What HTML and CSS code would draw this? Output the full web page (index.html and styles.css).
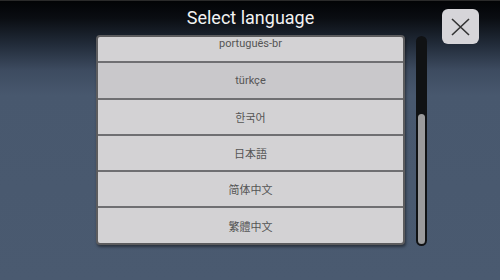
FILE: index.html
```html
<html>
    <head>
        <link rel="stylesheet" href="styles.css">
    </head>
    <body>
        <div class="screen">
            <div class="main">
                <h1 class="title">Select language</h1>
                <div class="panel">
                    <div class="list">
                        <div class="row">português-br</div>
                        <div class="row active">türkçe</div>
                        <div class="row" lang="ko">한국어</div>
                        <div class="row" lang="ja">日本語</div>
                        <div class="row" lang="zh-CN">简体中文</div>
                        <div class="row" lang="zh-TW">繁體中文</div>
                    </div>
                </div>
            </div>
            <div class="scrollbar">
                <div class="thumb"></div>
            </div>
            <button class="close">
                <svg width="19" height="18" viewBox="0 0 19 18">
                    <path d="M1 1 L18 17 M18 1 L1 17" stroke="#333" stroke-width="1.6" fill="none"/>
                </svg>
            </button>
        </div>
    </body>
</html>
```

FILE: styles.css
```css
body{
    margin: 0;
    width: 500px;
    height: 280px;
    overflow: hidden;
    font-family: Roboto, "Noto Sans", sans-serif;
    background: linear-gradient(to bottom, #020305 0px, #0a0d12 18px, #222c3a 45px, #3d4b60 70px, #48586e 95px, #4a5a70 100%);
}
.screen{
    display: flex;
    height: 280px;
    padding-left: 96px;
    box-sizing: border-box;
    border-top: 1px solid #2a2a2a;
}
.main{
    width: 309px;
    display: flex;
    flex-direction: column;
}
.title{
    margin: 0;
    height: 34px;
    line-height: 34px;
    text-align: center;
    color: #f2f2f2;
    font-size: 18px;
    font-weight: normal;
}
.panel{
    height: 210px;
    box-sizing: border-box;
    border: 2px solid #5c5c5e;
    border-radius: 4px;
    overflow: hidden;
    background-color: #d3d2d4;
    box-shadow: 1px 2px 3px rgba(0, 0, 0, 0.45);
}
.list{
    margin-top: -12px;
}
.row{
    height: 36.3px;
    box-sizing: border-box;
    border-top: 2px solid #6f6f72;
    display: flex;
    align-items: center;
    justify-content: center;
    color: #555;
    font-size: 11px;
    font-family: Roboto, "Noto Sans CJK KR", "Noto Sans CJK JP", sans-serif;
}
.row:first-child{
    border-top: none;
}
.row[lang=ko]{
    font-family: "Noto Sans CJK KR", sans-serif;
}
.row[lang=ja]{
    font-family: "Noto Sans CJK JP", sans-serif;
}
.row[lang=zh-CN]{
    font-family: "Noto Sans CJK SC", sans-serif;
}
.row[lang=zh-TW]{
    font-family: "Noto Sans CJK TC", sans-serif;
}
.active{
    background-color: #c9c8cb;
}
.scrollbar{
    width: 11px;
    height: 210px;
    margin-top: 35px;
    margin-left: 11px;
    box-sizing: border-box;
    padding: 78px 2px 2px 2px;
    background-color: #101214;
    border-radius: 6px;
}
.thumb{
    height: 100%;
    background-color: #9b9b9c;
    border-radius: 4px;
}
.close{
    width: 37px;
    height: 35px;
    margin-top: 8px;
    margin-left: 15px;
    padding: 0;
    border: none;
    border-radius: 6px;
    background-color: #d6d5d9;
    display: flex;
    align-items: center;
    justify-content: center;
}
```
